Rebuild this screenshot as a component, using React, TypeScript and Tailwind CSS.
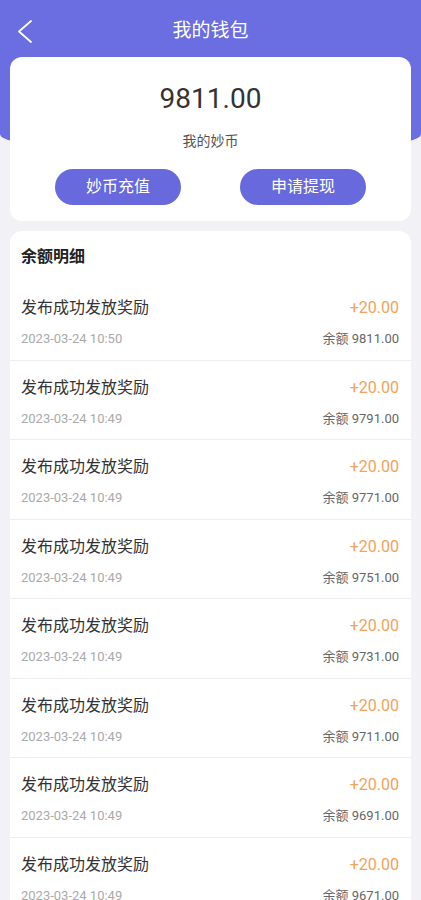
type Record = {
  time: string;
  balance: string;
};

const records: Record[] = [
  { time: "2023-03-24 10:50", balance: "9811.00" },
  { time: "2023-03-24 10:49", balance: "9791.00" },
  { time: "2023-03-24 10:49", balance: "9771.00" },
  { time: "2023-03-24 10:49", balance: "9751.00" },
  { time: "2023-03-24 10:49", balance: "9731.00" },
  { time: "2023-03-24 10:49", balance: "9711.00" },
  { time: "2023-03-24 10:49", balance: "9691.00" },
  { time: "2023-03-24 10:49", balance: "9671.00" },
];

const App = () => {
  return (
    <div
      className="min-h-[900px] bg-[#f2f1f6] pb-4"
      style={{ fontFamily: 'Roboto, "Noto Sans CJK SC", sans-serif' }}
    >
      {/* 상단 보라 배경 */}
      <div className="h-[156px] bg-[#6a6ee0] rounded-b-[50%_22px]">
        <div className="relative flex items-center justify-center h-[60px]">
          <svg
            className="absolute left-[16px] top-[19px]"
            width="18"
            height="25"
            viewBox="0 0 18 25"
            fill="none"
          >
            <polyline
              points="15,2 3,12.5 15,23"
              stroke="white"
              strokeWidth="1.8"
              strokeLinecap="round"
              strokeLinejoin="round"
            />
          </svg>
          <h1 className="text-[19px] leading-none text-white">我的钱包</h1>
        </div>
      </div>

      {/* 잔액 카드 */}
      <div className="mx-[10px] -mt-[99px] rounded-[12px] bg-white pt-[25px] pb-[16px]">
        <p className="text-center text-[28px] leading-[34px] text-[#333]">
          9811.00
        </p>
        <p className="mt-[15px] text-center text-[14px] leading-[20px] text-[#555]">
          我的妙币
        </p>
        <div className="flex justify-between mt-[18px] px-[45px]">
          <button className="w-[126px] h-[36px] rounded-full bg-[#6769dc] text-[16px] text-white">
            妙币充值
          </button>
          <button className="w-[126px] h-[36px] rounded-full bg-[#6769dc] text-[16px] text-white">
            申请提现
          </button>
        </div>
      </div>

      {/* 余额明细 */}
      <div className="mx-[10px] mt-[10px] rounded-[12px] bg-white">
        <div className="px-[11px] pt-[15px] pb-[13px]">
          <h2 className="text-[16px] leading-[22px] font-bold text-[#222]">
            余额明细
          </h2>
        </div>
        {records.map((r, i) => (
          <div
            key={i}
            className="pl-[11px] pr-[12px] pt-[16px] pb-[11.5px] border-b border-[#eeeeee]"
          >
            <div className="flex justify-between items-center">
              <p className="text-[16px] leading-[22px] text-[#333]">
                发布成功发放奖励
              </p>
              <p className="text-[16px] leading-[22px] text-[#f2a259]">
                +20.00
              </p>
            </div>
            <div className="flex justify-between items-center mt-[11px]">
              <p className="text-[13px] leading-[18px] text-[#aaaaaa]">
                {r.time}
              </p>
              <p className="text-[13px] leading-[18px] text-[#666]">
                余额 {r.balance}
              </p>
            </div>
          </div>
        ))}
      </div>
    </div>
  );
};

export default App;
